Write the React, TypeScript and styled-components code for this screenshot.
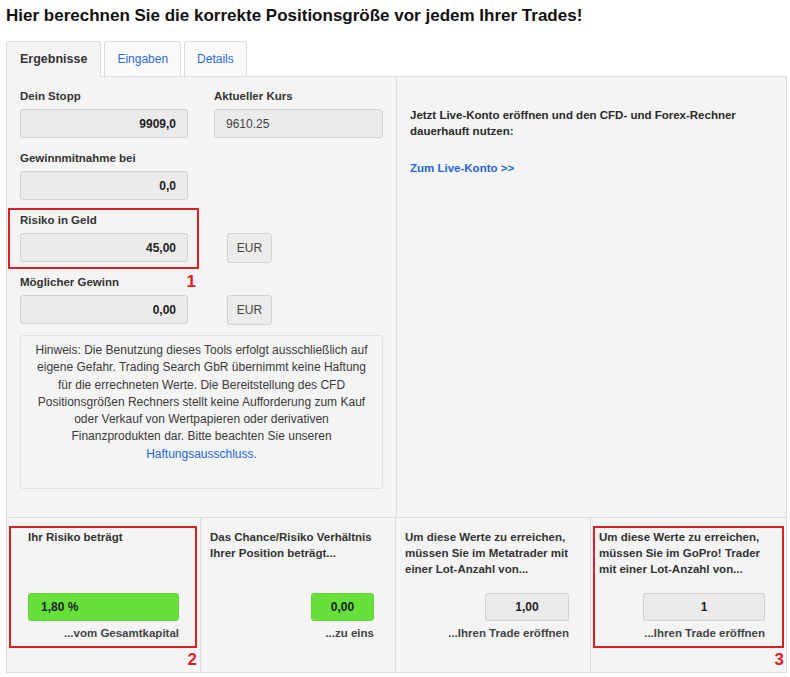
import React from "react";
import styled, { createGlobalStyle } from "styled-components";

const GlobalStyle = createGlobalStyle`
  html, body { margin: 0; padding: 0; background: #ffffff; }
  body { font-family: "Liberation Sans", Arial, sans-serif; color: #333; }
  * { box-sizing: border-box; }
`;

const RED = "#dc1f26";
const BORDER = "#dcdcdc";
const PANEL = "#f4f4f4";

const Page = styled.div`
  width: 781px;
  margin-left: 6px;
`;

const Title = styled.h1`
  margin: 6px 0 15px;
  font-size: 17px;
  line-height: 20px;
  font-weight: bold;
  color: #111;
`;

const TabBar = styled.div`
  display: flex;
  gap: 3px;
  position: relative;
  z-index: 1;
`;

const Tab = styled.div<{ $active?: boolean }>`
  height: 36px;
  padding: 0 ${(p) => (p.$active ? 13 : 12)}px;
  display: flex;
  align-items: center;
  border: 1px solid ${BORDER};
  border-bottom-color: ${(p) => (p.$active ? PANEL : BORDER)};
  border-radius: 3px 3px 0 0;
  background: ${(p) => (p.$active ? PANEL : "#fafafa")};
  font-size: ${(p) => (p.$active ? 12.5 : 12)}px;
  font-weight: ${(p) => (p.$active ? "bold" : "normal")};
  color: ${(p) => (p.$active ? "#333" : "#2f6bd6")};
`;

const Panel = styled.div`
  margin-top: -1px;
  border: 1px solid ${BORDER};
  background: ${PANEL};
`;

const TopSection = styled.div`
  display: grid;
  grid-template-columns: 390px 1fr;
  border-bottom: 1px solid ${BORDER};
`;

const LeftColumn = styled.div`
  padding: 12px 13px 28px 13px;
  border-right: 1px solid ${BORDER};
`;

const FieldGrid = styled.div`
  display: grid;
  grid-template-columns: 168px 169px;
  column-gap: 26px;
  row-gap: 13px;
`;

const FieldGroup = styled.div`
  position: relative;
  display: flex;
  flex-direction: column;
`;

const Label = styled.div`
  font-size: 11.5px;
  line-height: 15px;
  font-weight: bold;
  color: #333;
  margin-bottom: 5px;
`;

const ValueInput = styled.div<{ $bold?: boolean; $align?: "left" | "right" }>`
  height: 29px;
  display: flex;
  align-items: center;
  justify-content: ${(p) => (p.$align === "left" ? "flex-start" : "flex-end")};
  padding: 0 11px;
  background: #ebebeb;
  border: 1px solid #d2d2d2;
  border-radius: 3px;
  font-size: 12px;
  font-weight: ${(p) => (p.$bold ? "bold" : "normal")};
  color: ${(p) => (p.$bold ? "#222" : "#444")};
`;

const CurrencyButton = styled.div`
  align-self: end;
  margin-left: 13px;
  margin-bottom: -1px;
  width: 45px;
  height: 30px;
  display: flex;
  align-items: center;
  justify-content: center;
  background: #ececec;
  border: 1px solid #d2d2d2;
  border-radius: 3px;
  font-size: 12px;
  color: #444;
`;

const Notice = styled.div`
  margin-top: 11px;
  height: 154px;
  padding: 6px 10px 0;
  border: 1px solid #e2e2e2;
  border-radius: 3px;
  background: ${PANEL};
  text-align: center;
  font-size: 12px;
  line-height: 17.3px;
  color: #3a3a3a;
`;

const Link = styled.a<{ $bold?: boolean }>`
  color: #2266d6;
  text-decoration: none;
  font-weight: ${(p) => (p.$bold ? "bold" : "normal")};
`;

const RightColumn = styled.div`
  padding: 31px 13px 0 13px;
`;

const Promo = styled.p`
  margin: 0 0 21px;
  font-size: 11.5px;
  line-height: 15.5px;
  font-weight: bold;
  color: #2a2a2a;
`;

const PromoLink = styled.div`
  font-size: 11.5px;
  line-height: 16px;
`;

const ResultRow = styled.div`
  display: grid;
  grid-template-columns: 194px 195px 195px 1fr;
`;

const ResultCell = styled.div<{ $padLeft: number }>`
  position: relative;
  display: flex;
  flex-direction: column;
  padding: 11px 21px 31px ${(p) => p.$padLeft}px;
  border-right: 1px solid ${BORDER};
  &:last-child {
    border-right: none;
  }
`;

const ResultHeading = styled.div`
  min-height: 48px;
  margin-bottom: 16px;
  font-size: 11.5px;
  line-height: 16px;
  font-weight: bold;
  color: #333;
`;

const ResultValue = styled.div<{ $tone: "green" | "gray"; $width?: number; $align: "left" | "center" }>`
  align-self: flex-end;
  width: ${(p) => (p.$width ? `${p.$width}px` : "100%")};
  height: 28px;
  display: flex;
  align-items: center;
  justify-content: ${(p) => (p.$align === "left" ? "flex-start" : "center")};
  padding: 0 12px;
  border-radius: 3px;
  background: ${(p) => (p.$tone === "green" ? "#68e03c" : "#ebebeb")};
  border: 1px solid ${(p) => (p.$tone === "green" ? "#61d437" : "#d2d2d2")};
  font-size: 12px;
  font-weight: bold;
  color: #1e1e1e;
`;

const ResultFoot = styled.div`
  margin-top: 4px;
  text-align: right;
  font-size: 11.5px;
  line-height: 16px;
  font-weight: bold;
  color: #444;
`;

/* Annotation overlays (red frames and numbers drawn over the screenshot) */
const Marker = styled.span<{ $top: number; $right: number; $bottom: number; $left: number }>`
  position: absolute;
  top: ${(p) => p.$top}px;
  right: ${(p) => p.$right}px;
  bottom: ${(p) => p.$bottom}px;
  left: ${(p) => p.$left}px;
  border: 2px solid ${RED};
  pointer-events: none;
`;

const MarkerNumber = styled.span<{ $top: number; $right: number }>`
  position: absolute;
  top: ${(p) => p.$top}px;
  right: ${(p) => p.$right}px;
  font-size: 17px;
  line-height: 17px;
  font-weight: bold;
  color: ${RED};
`;

export default function App() {
  return (
    <>
      <GlobalStyle />
      <Page>
        <Title>Hier berechnen Sie die korrekte Positionsgröße vor jedem Ihrer Trades!</Title>
        <TabBar>
          <Tab $active>Ergebnisse</Tab>
          <Tab>Eingaben</Tab>
          <Tab>Details</Tab>
        </TabBar>
        <Panel>
          <TopSection>
            <LeftColumn>
              <FieldGrid>
                <FieldGroup>
                  <Label>Dein Stopp</Label>
                  <ValueInput $bold>9909,0</ValueInput>
                </FieldGroup>
                <FieldGroup>
                  <Label>Aktueller Kurs</Label>
                  <ValueInput $align="left">9610.25</ValueInput>
                </FieldGroup>

                <FieldGroup>
                  <Label>Gewinnmitnahme bei</Label>
                  <ValueInput $bold>0,0</ValueInput>
                </FieldGroup>
                <div />

                <FieldGroup>
                  <Label>Risiko in Geld</Label>
                  <ValueInput $bold>45,00</ValueInput>
                  <Marker $top={-5} $right={-11} $bottom={-7} $left={-12} />
                  <MarkerNumber $top={60} $right={-8}>1</MarkerNumber>
                </FieldGroup>
                <CurrencyButton>EUR</CurrencyButton>

                <FieldGroup>
                  <Label>Möglicher Gewinn</Label>
                  <ValueInput $bold>0,00</ValueInput>
                </FieldGroup>
                <CurrencyButton>EUR</CurrencyButton>
              </FieldGrid>

              <Notice>
                Hinweis: Die Benutzung dieses Tools erfolgt ausschließlich auf eigene Gefahr. Trading Search GbR
                übernimmt keine Haftung für die errechneten Werte. Die Bereitstellung des CFD Positionsgrößen
                Rechners stellt keine Aufforderung zum Kauf oder Verkauf von Wertpapieren oder derivativen
                Finanzprodukten dar. Bitte beachten Sie unseren <Link href="#">Haftungsausschluss.</Link>
              </Notice>
            </LeftColumn>

            <RightColumn>
              <Promo>Jetzt Live-Konto eröffnen und den CFD- und Forex-Rechner dauerhauft nutzen:</Promo>
              <PromoLink>
                <Link href="#" $bold>
                  Zum Live-Konto &gt;&gt;
                </Link>
              </PromoLink>
            </RightColumn>
          </TopSection>

          <ResultRow>
            <ResultCell $padLeft={21}>
              <ResultHeading>Ihr Risiko beträgt</ResultHeading>
              <ResultValue $tone="green" $align="left">
                1,80 %
              </ResultValue>
              <ResultFoot>...vom Gesamtkapital</ResultFoot>
              <Marker $top={8} $right={3} $bottom={24} $left={2} />
              <MarkerNumber $top={133} $right={3}>2</MarkerNumber>
            </ResultCell>

            <ResultCell $padLeft={9}>
              <ResultHeading>Das Chance/Risiko Verhältnis Ihrer Position beträgt...</ResultHeading>
              <ResultValue $tone="green" $width={63} $align="center">
                0,00
              </ResultValue>
              <ResultFoot>...zu eins</ResultFoot>
            </ResultCell>

            <ResultCell $padLeft={9}>
              <ResultHeading>Um diese Werte zu erreichen, müssen Sie im Metatrader mit einer Lot-Anzahl von...</ResultHeading>
              <ResultValue $tone="gray" $width={84} $align="center">
                1,00
              </ResultValue>
              <ResultFoot>...Ihren Trade eröffnen</ResultFoot>
            </ResultCell>

            <ResultCell $padLeft={8}>
              <ResultHeading>Um diese Werte zu erreichen, müssen Sie im GoPro! Trader mit einer Lot-Anzahl von...</ResultHeading>
              <ResultValue $tone="gray" $width={122} $align="center">
                1
              </ResultValue>
              <ResultFoot>...Ihren Trade eröffnen</ResultFoot>
              <Marker $top={8} $right={2} $bottom={24} $left={2} />
              <MarkerNumber $top={133} $right={2}>3</MarkerNumber>
            </ResultCell>
          </ResultRow>
        </Panel>
      </Page>
    </>
  );
}
